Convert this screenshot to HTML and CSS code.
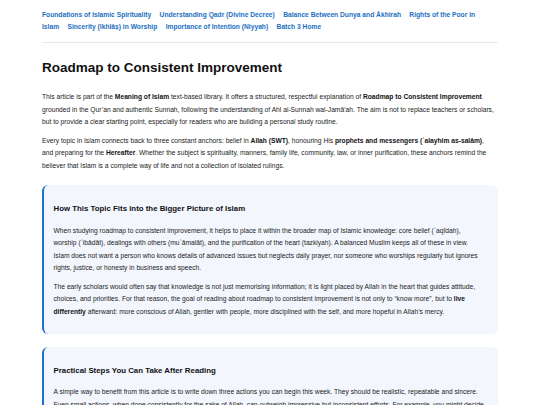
FILE: index.html
```html
<!DOCTYPE html>
<html lang="en">
<head>
<meta charset="utf-8">
<title>Roadmap to Consistent Improvement</title>
<link rel="stylesheet" href="styles.css">
</head>
<body>
<div class="page">
  <nav class="topnav">
    <a href="#">Foundations of Islamic Spirituality</a>
    <a href="#">Understanding Qadr (Divine Decree)</a>
    <a href="#">Balance Between Dunya and Ākhirah</a>
    <a href="#">Rights of the Poor in Islam</a>
    <a href="#">Sincerity (Ikhlāṣ) in Worship</a>
    <a href="#">Importance of Intention (Niyyah)</a>
    <a href="#">Batch 3 Home</a>
  </nav>
  <main class="article">
    <h1 class="title">Roadmap to Consistent Improvement</h1>
    <p>This article is part of the <strong>Meaning of Islam</strong> text-based library. It offers a structured, respectful explanation of <strong>Roadmap to Consistent Improvement</strong> grounded in the Qur’an and authentic Sunnah, following the understanding of Ahl al-Sunnah wal-Jamā‘ah. The aim is not to replace teachers or scholars, but to provide a clear starting point, especially for readers who are building a personal study routine.</p>
    <p>Every topic in Islam connects back to three constant anchors: belief in <strong>Allah (SWT)</strong>, honouring His <strong>prophets and messengers (ʿalayhim as-salām)</strong>, and preparing for the <strong>Hereafter</strong>. Whether the subject is spirituality, manners, family life, community, law, or inner purification, these anchors remind the believer that Islam is a complete way of life and not a collection of isolated rulings.</p>
    <section class="callout">
      <h3>How This Topic Fits into the Bigger Picture of Islam</h3>
      <p>When studying roadmap to consistent improvement, it helps to place it within the broader map of Islamic knowledge: core belief (ʿaqīdah), worship (ʿibādāt), dealings with others (muʿāmalāt), and the purification of the heart (tazkiyah). A balanced Muslim keeps all of these in view. Islam does not want a person who knows details of advanced issues but neglects daily prayer, nor someone who worships regularly but ignores rights, justice, or honesty in business and speech.</p>
      <p>The early scholars would often say that knowledge is not just memorising information; it is light placed by Allah in the heart that guides attitude, choices, and priorities. For that reason, the goal of reading about roadmap to consistent improvement is not only to “know more”, but to <strong>live differently</strong> afterward: more conscious of Allah, gentler with people, more disciplined with the self, and more hopeful in Allah’s mercy.</p>
    </section>
    <section class="callout">
      <h3>Practical Steps You Can Take After Reading</h3>
      <p>A simple way to benefit from this article is to write down three actions you can begin this week. They should be realistic, repeatable and sincere. Even small actions, when done consistently for the sake of Allah, can outweigh impressive but inconsistent efforts. For example, you might decide to read a few verses daily with reflection, to guard one prayer on time, or to make a short du‘ā’ each night.</p>
    </section>
  </main>
</div>
</body>
</html>
```

FILE: styles.css
```css
html, body {
  margin: 0;
  padding: 0;
  background: #ffffff;
}

body {
  font-family: "Liberation Sans", Arial, sans-serif;
  font-size: 6.7px;
  line-height: 12.4px;
  color: #222222;
}

.page {
  width: 456px;
  margin: 0 auto;
  padding-top: 8.5px;
}

.topnav {
  line-height: 12.3px;
  padding-bottom: 9px;
  border-bottom: 1px solid #e4e9f0;
}

.topnav a {
  color: #1b6fc2;
  font-weight: bold;
  text-decoration: none;
  margin-right: 6.5px;
}

.title {
  font-size: 13.5px;
  line-height: 18px;
  color: #111111;
  margin: 16px 0 14px;
}

.article > p {
  margin: 6.7px 0;
  padding-right: 2px;
}

.article strong {
  color: #111111;
}

.callout {
  background: #f3f6fd;
  border-left: 2.5px solid #1e6fd0;
  border-radius: 6px;
  margin: 13px 0;
  padding: 10px 11px 9px 9.5px;
}

.callout p {
  margin: 6.7px 0;
  padding-right: 1.9px;
}

.callout h3 {
  font-size: 7.85px;
  line-height: 10.5px;
  color: #111111;
  margin: 9px 0 10px;
}
```
